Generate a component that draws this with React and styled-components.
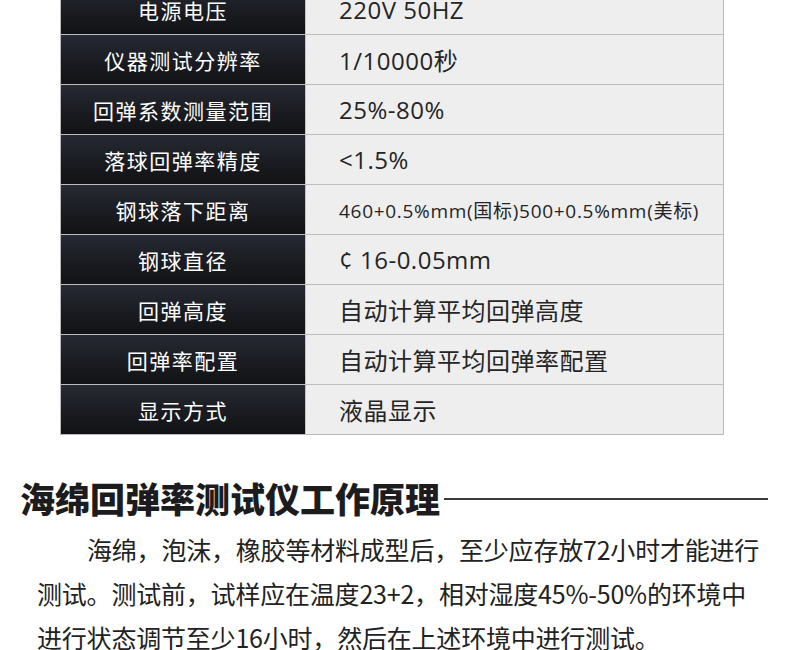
import React from 'react';
import styled, { createGlobalStyle } from 'styled-components';

const GlobalStyle = createGlobalStyle`
  html, body {
    margin: 0;
    padding: 0;
    background: #fff;
    overflow: hidden;
  }
  body {
    font-family: "Open Sans", "Noto Sans CJK SC", sans-serif;
  }
`;

const Page = styled.div`
  width: 790px;
  height: 650px;
  overflow: hidden;
`;

const Table = styled.div`
  width: 664px;
  margin: -15px 0 0 60px;
  border: 1px solid #b9b9b9;
  border-top: none;
  box-sizing: border-box;
`;

const Row = styled.div`
  display: grid;
  grid-template-columns: 245px 1fr;
  height: 50px;
  border-bottom: 1px solid #bdbdbd;
  box-sizing: border-box;

  &:last-child {
    border-bottom: none;
    height: 49px;
  }
`;

const Label = styled.div`
  display: flex;
  align-items: center;
  justify-content: center;
  background: linear-gradient(180deg, #272a33 0%, #1b1d23 50%, #111215 100%);
  color: #fff;
  font-family: "Noto Sans CJK SC", sans-serif;
  font-size: 21px;
  letter-spacing: 1.5px;
  border-right: 1px solid #c4c4c4;
`;

const Value = styled.div`
  display: flex;
  align-items: center;
  padding-left: 33px;
  background: #eeeeee;
  color: #252525;
  font-family: "Open Sans", "Noto Sans CJK SC", sans-serif;
  font-size: ${(p) => (p.small ? 19 : 24)}px;
  letter-spacing: ${(p) => (p.small ? 0.7 : 0.5)}px;
  white-space: nowrap;
`;

const Section = styled.section`
  padding: 43px 22px 0 20px;
`;

const Heading = styled.div`
  display: flex;
  align-items: center;
  gap: 4px;
`;

const Title = styled.h2`
  margin: 0;
  font-family: "Noto Sans CJK SC", sans-serif;
  font-weight: 900;
  font-size: 35px;
  line-height: 40px;
  color: #1c1c1e;
  white-space: nowrap;
`;

const Rule = styled.div`
  flex: 1;
  height: 2px;
  background: #3a3a3a;
  margin-top: 1px;
`;

const Paragraph = styled.p`
  margin: 9px 0 0 17px;
  font-family: "Noto Sans CJK SC", sans-serif;
  font-size: 25px;
  line-height: 44px;
  color: #222;
  text-indent: 2em;
  white-space: nowrap;
  letter-spacing: -0.2px;
`;

const specs = [
  ['电源电压', '220V 50HZ'],
  ['仪器测试分辨率', '1/10000秒'],
  ['回弹系数测量范围', '25%-80%'],
  ['落球回弹率精度', '<1.5%'],
  ['钢球落下距离', '460+0.5%mm(国标)500+0.5%mm(美标)', true],
  ['钢球直径', '¢ 16-0.05mm'],
  ['回弹高度', '自动计算平均回弹高度'],
  ['回弹率配置', '自动计算平均回弹率配置'],
  ['显示方式', '液晶显示'],
];

export default function App() {
  return (
    <Page>
      <GlobalStyle />
      <Table>
        {specs.map(([label, value, small]) => (
          <Row key={label}>
            <Label>{label}</Label>
            <Value small={small}>{value}</Value>
          </Row>
        ))}
      </Table>
      <Section>
        <Heading>
          <Title>海绵回弹率测试仪工作原理</Title>
          <Rule />
        </Heading>
        <Paragraph>
          海绵，泡沫，橡胶等材料成型后，至少应存放72小时才能进行
          <br />
          测试。测试前，试样应在温度23+2，相对湿度45%-50%的环境中
          <br />
          进行状态调节至少16小时，然后在上述环境中进行测试。
        </Paragraph>
      </Section>
    </Page>
  );
}
